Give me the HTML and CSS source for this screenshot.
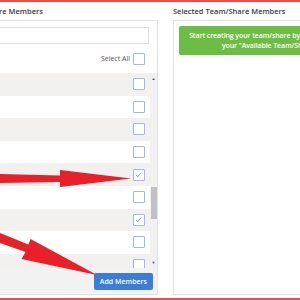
FILE: index.html
```html
<!DOCTYPE html>
<html lang="en">
<head>
    <meta charset="UTF-8">
    <title>Team/Share Members</title>
    <link rel="stylesheet" href="styles.css">
</head>
<body>
    <div class="frame">
        <div class="columns">
            <div class="col col-left">
                <h3>Available Team/Share Members</h3>
                <div class="panel">
                    <input type="text" class="search">
                    <div class="select-all">
                        <span>Select All</span>
                        <span class="check"></span>
                    </div>
                    <div class="list">
                        <div class="rows">
                            <div class="row"><span class="check"></span></div>
                            <div class="row"><span class="check"></span></div>
                            <div class="row"><span class="check"></span></div>
                            <div class="row"><span class="check"></span></div>
                            <div class="row"><span class="check on"><svg viewBox="0 0 12 12"><path d="M2.5 6.5 L5 9 L9.5 3.5"/></svg></span></div>
                            <div class="row"><span class="check"></span></div>
                            <div class="row"><span class="check on"><svg viewBox="0 0 12 12"><path d="M2.5 6.5 L5 9 L9.5 3.5"/></svg></span></div>
                            <div class="row"><span class="check"></span></div>
                            <div class="row"><span class="check"></span></div>
                        </div>
                        <div class="scrollbar">
                            <span class="arrow">&#9650;</span>
                            <div class="track"><div class="thumb"></div></div>
                            <span class="arrow">&#9660;</span>
                        </div>
                    </div>
                    <div class="footer">
                        <button>Add Members</button>
                    </div>
                </div>
            </div>
            <div class="col col-right">
                <h3>Selected Team/Share Members</h3>
                <div class="panel panel-right">
                    <div class="notice">Start creating your team/share by selecting members from<br>your "Available Team/Share Members"</div>
                </div>
            </div>
        </div>

        <!-- annotation arrows -->
        <svg class="marks" viewBox="0 0 300 300">
            <polygon points="0,172 60,173.5 60,168 131,176.5 60,185 60,180 0,181"/>
            <polygon points="0,231 28.4,242.6 30.6,237 97,273 21.5,257 25.6,250 0,241"/>
        </svg>
    </div>
</body>
</html>
```

FILE: styles.css
```css
body {
    margin: 0;
    width: 300px;
    height: 300px;
    overflow: hidden;
    background: white;
    font-family: "Open Sans", "Liberation Sans", sans-serif;
}

.frame {
    position: relative;
    height: 300px;
    box-sizing: border-box;
    border-top: 2px solid #ef4b4b;
    border-bottom: 2px solid #ef4b4b;
    overflow: hidden;
}

.columns {
    display: flex;
    gap: 15px;
    margin-left: -72px;
}

.col {
    width: 230px;
    flex-shrink: 0;
}

.col h3 {
    margin: 0;
    height: 18px;
    line-height: 18px;
    font-size: 7.5px;
    font-weight: 600;
    color: #3a3a3a;
    white-space: nowrap;
}

.panel {
    height: 275px;
    box-sizing: border-box;
    border: 1px solid #e4e4e4;
    display: flex;
    flex-direction: column;
}

.search {
    display: block;
    margin: 6px 8px 0 6px;
    height: 17px;
    box-sizing: border-box;
    border: 1px solid #dcdcdc;
    padding: 0;
    flex-shrink: 0;
}

.select-all {
    height: 29px;
    flex-shrink: 0;
    display: flex;
    justify-content: flex-end;
    align-items: center;
    gap: 3px;
    padding-right: 12px;
    font-size: 7px;
    color: #555;
}

.check {
    display: block;
    width: 12px;
    height: 12px;
    box-sizing: border-box;
    border: 1.5px solid #a5b8e4;
    border-radius: 1px;
    background: white;
}

.check svg {
    display: block;
    width: 9px;
    height: 9px;
    fill: none;
    stroke: #7f92c8;
    stroke-width: 1.1;
}

.list {
    height: 195px;
    flex-shrink: 0;
    display: flex;
    overflow: hidden;
}

.rows {
    flex: 1;
}

.row {
    height: 22.6px;
    display: flex;
    justify-content: flex-end;
    align-items: center;
    padding-right: 5px;
    background: white;
}

.row:nth-child(odd) {
    background: #f2f1f0;
}

.scrollbar {
    width: 7px;
    background: #f1f1f1;
    display: flex;
    flex-direction: column;
    align-items: center;
}

.arrow {
    font-size: 4px;
    line-height: 11px;
    height: 11px;
    color: #505050;
}

.track {
    flex: 1;
    width: 100%;
    padding-top: 103px;
}

.thumb {
    width: 6px;
    margin: 0 auto;
    height: 32px;
    background: #c1c1c1;
}

.footer {
    flex: 1;
    background: #f2f2f2;
    display: flex;
    justify-content: flex-end;
    padding: 5px 4px 0 0;
}

button {
    height: 17px;
    padding: 0 6px;
    border: none;
    border-radius: 2px;
    background: #3b7dd8;
    color: white;
    font-family: "Open Sans", "Liberation Sans", sans-serif;
    font-size: 7px;
    font-weight: 600;
}

.panel-right {
    padding: 5px 10px 5px 5px;
}

.notice {
    background: #6dbd45;
    color: white;
    border-radius: 2px;
    padding: 5px 0;
    font-size: 7px;
    font-weight: 600;
    letter-spacing: -0.1px;
    line-height: 9.5px;
    text-align: center;
    white-space: nowrap;
}

.marks {
    position: absolute;
    top: 0;
    left: 0;
    width: 300px;
    height: 300px;
    fill: #e8202a;
    pointer-events: none;
}
```
